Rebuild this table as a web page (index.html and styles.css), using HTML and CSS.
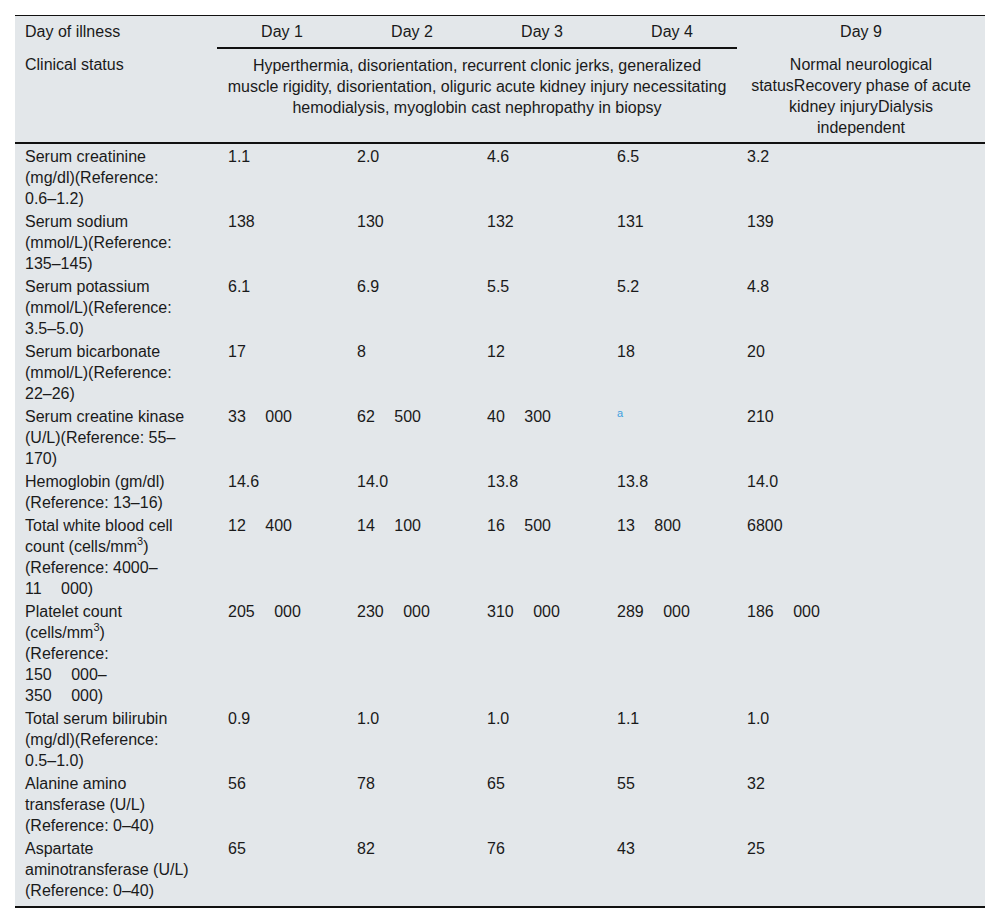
FILE: index.html
```html
<!DOCTYPE html>
<html lang="en">
<head>
<meta charset="utf-8">
<title>Day of illness table</title>
<link rel="stylesheet" href="styles.css">
</head>
<body>
<table class="lab">
  <colgroup>
    <col class="c-label">
    <col class="c-day"><col class="c-day"><col class="c-day"><col class="c-day">
    <col class="c-last">
  </colgroup>
  <thead>
    <tr class="h1">
      <th class="lbl">Day of illness</th>
      <th class="day">Day 1</th>
      <th class="day">Day 2</th>
      <th class="day">Day 3</th>
      <th class="day">Day 4</th>
      <th class="d9">Day 9</th>
    </tr>
    <tr class="h2">
      <th class="lbl">Clinical status</th>
      <th class="clin" colspan="4">Hyperthermia, disorientation, recurrent clonic jerks, generalized<br>muscle rigidity, disorientation, oliguric acute kidney injury necessitating<br>hemodialysis, myoglobin cast nephropathy in biopsy</th>
      <th class="d9">Normal neurological<br>statusRecovery phase of acute<br>kidney injuryDialysis<br>independent</th>
    </tr>
  </thead>
  <tbody>
    <tr>
      <td class="lbl">Serum creatinine<br>(mg/dl)(Reference:<br>0.6–1.2)</td>
      <td>1.1</td><td>2.0</td><td>4.6</td><td>6.5</td><td>3.2</td>
    </tr>
    <tr>
      <td class="lbl">Serum sodium<br>(mmol/L)(Reference:<br>135–145)</td>
      <td>138</td><td>130</td><td>132</td><td>131</td><td>139</td>
    </tr>
    <tr>
      <td class="lbl">Serum potassium<br>(mmol/L)(Reference:<br>3.5–5.0)</td>
      <td>6.1</td><td>6.9</td><td>5.5</td><td>5.2</td><td>4.8</td>
    </tr>
    <tr>
      <td class="lbl">Serum bicarbonate<br>(mmol/L)(Reference:<br>22–26)</td>
      <td>17</td><td>8</td><td>12</td><td>18</td><td>20</td>
    </tr>
    <tr>
      <td class="lbl">Serum creatine kinase<br>(U/L)(Reference: 55–<br>170)</td>
      <td><span class="num">33 000</span></td><td><span class="num">62 500</span></td><td><span class="num">40 300</span></td><td><a class="fn" href="#">a</a></td><td>210</td>
    </tr>
    <tr>
      <td class="lbl">Hemoglobin (gm/dl)<br>(Reference: 13–16)</td>
      <td>14.6</td><td>14.0</td><td>13.8</td><td>13.8</td><td>14.0</td>
    </tr>
    <tr>
      <td class="lbl">Total white blood cell<br>count (cells/mm<sup>3</sup>)<br>(Reference: 4000–<br><span class="num">11 000)</span></td>
      <td><span class="num">12 400</span></td><td><span class="num">14 100</span></td><td><span class="num">16 500</span></td><td><span class="num">13 800</span></td><td>6800</td>
    </tr>
    <tr>
      <td class="lbl">Platelet count<br>(cells/mm<sup>3</sup>)<br>(Reference:<br><span class="num">150 000–</span><br><span class="num">350 000)</span></td>
      <td><span class="num">205 000</span></td><td><span class="num">230 000</span></td><td><span class="num">310 000</span></td><td><span class="num">289 000</span></td><td><span class="num">186 000</span></td>
    </tr>
    <tr>
      <td class="lbl">Total serum bilirubin<br>(mg/dl)(Reference:<br>0.5–1.0)</td>
      <td>0.9</td><td>1.0</td><td>1.0</td><td>1.1</td><td>1.0</td>
    </tr>
    <tr>
      <td class="lbl">Alanine amino<br>transferase (U/L)<br>(Reference: 0–40)</td>
      <td>56</td><td>78</td><td>65</td><td>55</td><td>32</td>
    </tr>
    <tr class="last">
      <td class="lbl">Aspartate<br>aminotransferase (U/L)<br>(Reference: 0–40)</td>
      <td>65</td><td>82</td><td>76</td><td>43</td><td>25</td>
    </tr>
  </tbody>
</table>
</body>
</html>
```
FILE: styles.css
```css
html, body {
  margin: 0;
  padding: 0;
  background: #ffffff;
}

body {
  padding: 15px;
  font-family: "Liberation Sans", Arial, sans-serif;
  font-size: 16px;
  line-height: 21px;
  color: #1a1a1a;
}

.lab {
  width: 970px;
  table-layout: fixed;
  border-collapse: collapse;
  border-spacing: 0;
  background: #e3e7ea;
  border-top: 1px solid #111;
  border-bottom: 2px solid #111;
}

.c-label { width: 202px; }
.c-day { width: 130px; }
.c-last { width: 248px; }

.lab th,
.lab td {
  vertical-align: top;
  padding: 2px 10px 0;
  white-space: nowrap;
  font-weight: normal;
  text-align: left;
}

.lab thead th {
  text-align: center;
  padding: 5px 10px 5px;
}

.lab thead th.lbl {
  text-align: left;
}

.lab thead th.clin {
  padding-left: 4px;
  padding-right: 4px;
}

.lab thead tr.h1 th.day {
  border-bottom: 2px solid #111;
}

.lab thead tr.h2 th {
  padding-top: 6px;
  padding-bottom: 4px;
  border-bottom: 2px solid #111;
}

.lab tbody td:nth-child(2) {
  padding-left: 11px;
}

.lab tbody tr.last td {
  padding-bottom: 5px;
}

.num {
  word-spacing: 15px;
}

sup {
  font-size: 11px;
  line-height: 0;
  vertical-align: 7px;
}

.fn {
  color: #3d9fe0;
  font-size: 11px;
  text-decoration: none;
  position: relative;
  top: -5px;
}
```
